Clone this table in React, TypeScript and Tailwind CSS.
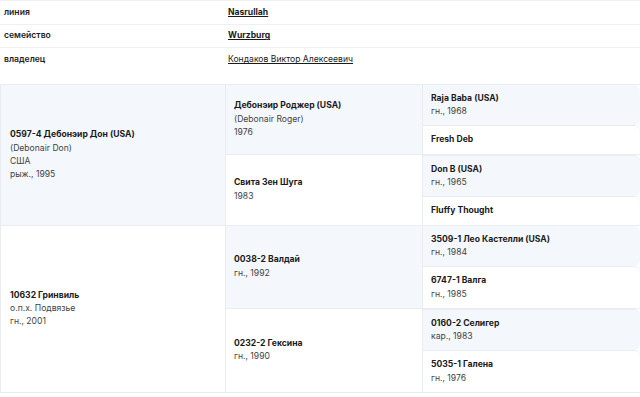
const info = [
  { label: "линия", value: "Nasrullah", bold: true },
  { label: "семейство", value: "Wurzburg", bold: true },
  { label: "владелец", value: "Кондаков Виктор Алексеевич", bold: false },
];

type Horse = { name: string; lines: string[] };
type Quarter = { parent: Horse; kids: [Horse, Horse] };
type Half = { horse: Horse; quarters: [Quarter, Quarter]; blue: boolean };

const halves: Half[] = [
  {
    horse: { name: "0597-4 Дебонэир Дон (USA)", lines: ["(Debonair Don)", "США", "рыж., 1995"] },
    blue: true,
    quarters: [
      {
        parent: { name: "Дебонэир Роджер (USA)", lines: ["(Debonair Roger)", "1976"] },
        kids: [
          { name: "Raja Baba (USA)", lines: ["гн., 1968"] },
          { name: "Fresh Deb", lines: [] },
        ],
      },
      {
        parent: { name: "Свита Зен Шуга", lines: ["1983"] },
        kids: [
          { name: "Don B (USA)", lines: ["гн., 1965"] },
          { name: "Fluffy Thought", lines: [] },
        ],
      },
    ],
  },
  {
    horse: { name: "10632 Гринвиль", lines: ["о.п.х. Подвязье", "гн., 2001"] },
    blue: false,
    quarters: [
      {
        parent: { name: "0038-2 Валдай", lines: ["гн., 1992"] },
        kids: [
          { name: "3509-1 Лео Кастелли (USA)", lines: ["гн., 1984"] },
          { name: "6747-1 Валга", lines: ["гн., 1985"] },
        ],
      },
      {
        parent: { name: "0232-2 Гексина", lines: ["гн., 1990"] },
        kids: [
          { name: "0160-2 Селигер", lines: ["кар., 1983"] },
          { name: "5035-1 Галена", lines: ["гн., 1976"] },
        ],
      },
    ],
  },
];

const HorseText = ({ horse }: { horse: Horse }) => (
  <div className="leading-[13px]">
    <div className="font-bold text-[#1b1b1b] leading-[13.5px]">{horse.name}</div>
    {horse.lines.map((l) => (
      <div key={l} className="text-[#444]">
        {l}
      </div>
    ))}
  </div>
);

export default function App() {
  return (
    <div
      className="w-[640px] h-[397px] bg-white text-[8.6px] overflow-hidden"
      style={{ fontFamily: "Inter, 'Noto Sans', sans-serif" }}
    >
      {/* Info */}
      <div className="border-t border-[#eef0f3]">
        {info.map((row, i) => (
          <div
            key={row.label}
            className={`flex items-center h-[23.5px] ${i < 2 ? "border-b border-[#eef0f3]" : ""}`}
          >
            <div className="w-[228px] pl-1 font-semibold text-[#222]">{row.label}</div>
            <a className={`underline text-[#1b1b1b] ${row.bold ? "font-bold" : ""}`}>{row.value}</a>
          </div>
        ))}
      </div>

      {/* Pedigree */}
      <div className="mt-[12px] border-t border-l border-[#e9edf2]">
        {halves.map((half, h) => (
          <div key={h} className={`flex ${h > 0 ? "border-t border-[#e9edf2]" : ""}`}>
            <div
              className={`w-[225px] shrink-0 flex items-center px-[9px] border-r border-[#e9edf2] ${
                half.blue ? "bg-[#f4f7fb]" : "bg-white"
              }`}
            >
              <HorseText horse={half.horse} />
            </div>
            <div className="flex-1 flex flex-col">
              {half.quarters.map((q, qi) => (
                <div key={qi} className={`flex ${qi > 0 ? "border-t border-[#e9edf2]" : ""}`}>
                  <div
                    className={`w-[197px] shrink-0 flex items-center px-[8px] border-r border-[#e9edf2] ${
                      qi === 0 ? "bg-[#f4f7fb]" : "bg-white"
                    }`}
                  >
                    <HorseText horse={q.parent} />
                  </div>
                  <div className="flex-1 flex flex-col">
                    {q.kids.map((k, ki) => (
                      <div
                        key={ki}
                        className={`px-[8px] py-[7px] rounded-r-[6px] border-[#e9edf2] ${
                          ki === 0 ? "bg-[#f4f7fb]" : "bg-white border-t"
                        } ${ki === 0 && qi > 0 ? "border-t" : ""}`}
                      >
                        <HorseText horse={k} />
                      </div>
                    ))}
                  </div>
                </div>
              ))}
            </div>
          </div>
        ))}
      </div>
      <div className="border-t border-[#e9edf2]" />
    </div>
  );
}
